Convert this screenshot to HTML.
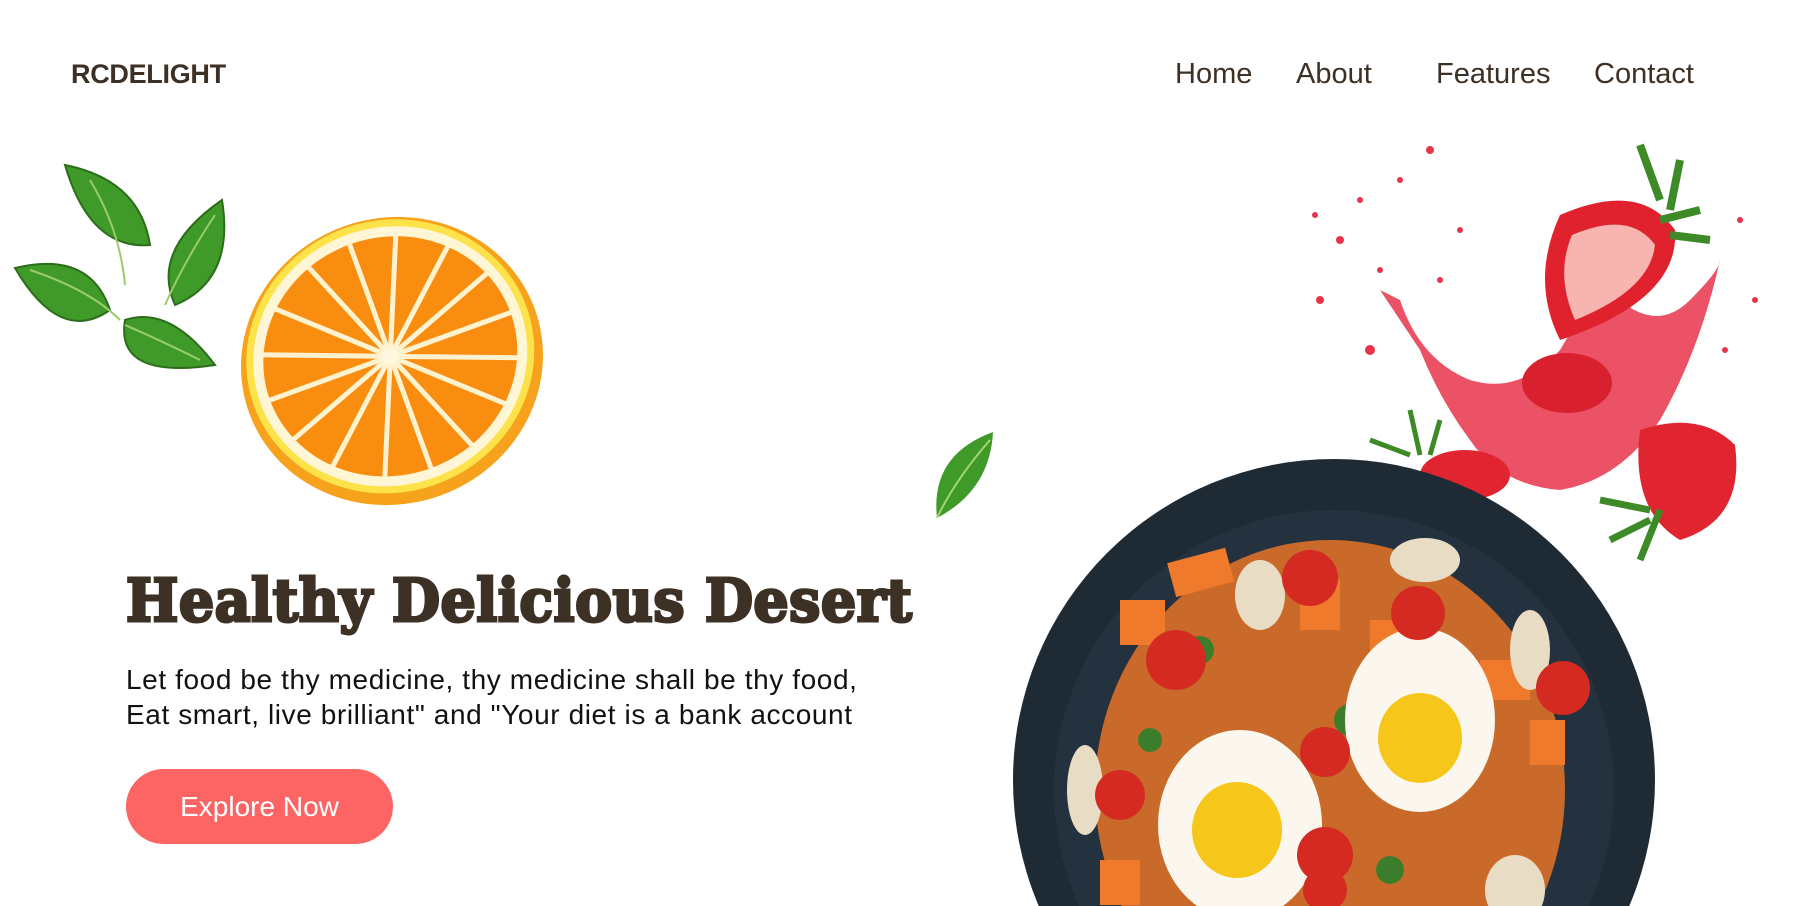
<!DOCTYPE html>
<html><head><meta charset="utf-8"><style>
html,body{margin:0;padding:0;background:#fff;width:1798px;height:906px;overflow:hidden;position:relative;font-family:"Liberation Sans",sans-serif}
.logo{position:absolute;left:71px;top:59px;font-weight:bold;font-size:27px;color:#3d3024;letter-spacing:-0.3px}
.nav{position:absolute;top:58px;font-size:29px;color:#3d3024;font-weight:300}
h1{position:absolute;left:126px;top:566px;margin:0;font-family:"DejaVu Serif","Liberation Serif",serif;font-weight:900;font-size:59px;color:#3d3024;white-space:nowrap;transform-origin:left top;transform:scaleX(0.94);letter-spacing:0.5px;-webkit-text-stroke:3px #3d3024}
p{position:absolute;left:126px;top:662px;margin:0;font-size:28px;line-height:35px;color:#111;letter-spacing:0.6px}
.btn{position:absolute;left:126px;top:769px;width:267px;height:75px;border-radius:38px;background:#fd6464;color:#fff;font-size:28px;text-align:center;line-height:75px}
svg{position:absolute;left:0;top:0}
</style></head><body>
<svg width="1798" height="906" viewBox="0 0 1798 906">
<g fill="#3f9a2a" stroke="#2b6e1a" stroke-width="2">
<path d="M65 165 Q140 180 150 245 Q90 250 65 165Z"/>
<path d="M222 200 Q235 280 175 305 Q150 250 222 200Z"/>
<path d="M15 268 Q90 250 110 310 Q60 345 15 268Z"/>
<path d="M215 365 Q170 305 125 320 Q115 380 215 365Z"/>
</g>
<path d="M90 180 Q120 230 125 285 M215 215 Q185 260 165 305 M30 270 Q90 290 120 320 M200 360 Q160 340 125 325" stroke="#9ccc6a" stroke-width="2" fill="none"/>
<g transform="rotate(-20 392 361)">
<ellipse cx="392" cy="361" rx="152" ry="143" fill="#f6a21c"/>
<ellipse cx="392" cy="356" rx="145" ry="136" fill="#fde24a"/>
<ellipse cx="392" cy="356" rx="138" ry="129" fill="#fff6d6"/>
<ellipse cx="392" cy="356" rx="128" ry="119" fill="#f98d10"/>
<g stroke="#fff3cf" stroke-width="5">
<line x1="392" y1="237" x2="392" y2="475"/><line x1="264" y1="356" x2="520" y2="356"/>
<line x1="300" y1="272" x2="484" y2="440"/><line x1="484" y1="272" x2="300" y2="440"/>
<line x1="345" y1="243" x2="439" y2="469"/><line x1="439" y1="243" x2="345" y2="469"/>
<line x1="270" y1="310" x2="514" y2="402"/><line x1="514" y1="310" x2="270" y2="402"/>
</g>
<circle cx="392" cy="356" r="8" fill="#fff8e0"/>
</g>
<path d="M993 432 Q930 455 937 518 Q990 490 993 432Z" fill="#3f9a2a"/>
<path d="M990 440 Q955 480 937 518" stroke="#a5d66d" stroke-width="2" fill="none"/>
<g fill="#e8344a">
<path d="M1400 300 Q1420 360 1470 380 Q1520 395 1560 350 Q1590 300 1600 280 Q1650 340 1690 300 Q1720 270 1720 260 Q1700 350 1660 420 Q1620 480 1560 490 Q1500 485 1470 440 Q1440 400 1420 350 Q1400 320 1380 290Z" opacity="0.85"/>
<circle cx="1340" cy="240" r="4"/><circle cx="1360" cy="200" r="3"/><circle cx="1430" cy="150" r="4"/><circle cx="1320" cy="300" r="4"/><circle cx="1400" cy="180" r="3"/><circle cx="1460" cy="230" r="3"/><circle cx="1370" cy="350" r="5"/><circle cx="1740" cy="220" r="3"/><circle cx="1755" cy="300" r="3"/><circle cx="1380" cy="270" r="3"/><circle cx="1440" cy="280" r="3"/><circle cx="1315" cy="215" r="3"/><circle cx="1725" cy="350" r="3"/>
</g>
<path d="M1560 215 Q1640 180 1675 230 Q1680 300 1560 340 Q1530 280 1560 215Z" fill="#e0222e"/>
<path d="M1572 235 Q1630 210 1655 245 Q1650 290 1575 320 Q1555 275 1572 235Z" fill="#f7b4b0"/>
<path d="M1640 145 L1660 200 M1680 160 L1670 210 M1700 210 L1660 220 M1710 240 L1670 235" stroke="#3d8a26" stroke-width="8"/>
<ellipse cx="1567" cy="383" rx="45" ry="30" fill="#d9202f"/>
<path d="M1640 430 Q1700 410 1735 445 Q1745 520 1680 540 Q1630 510 1640 430Z" fill="#e02530"/>
<path d="M1600 500 L1650 510 M1640 560 L1660 510 M1610 540 L1650 520" stroke="#3d8a26" stroke-width="7"/>
<path d="M1370 440 L1410 455 M1410 410 L1420 455 M1440 420 L1430 455" stroke="#3d8a26" stroke-width="5"/>
<ellipse cx="1465" cy="475" rx="45" ry="25" fill="#e02530"/>
<circle cx="1334" cy="780" r="321" fill="#1e2a34"/>
<circle cx="1334" cy="790" r="280" fill="#243240"/>
<g>
<ellipse cx="1330" cy="790" rx="235" ry="250" fill="#c96a2a"/>
<g fill="#f07a2c"><rect x="1170" y="555" width="60" height="35" transform="rotate(-15 1200 570)"/><rect x="1120" y="600" width="45" height="45"/><rect x="1300" y="580" width="40" height="50"/><rect x="1530" y="720" width="35" height="45"/><rect x="1100" y="860" width="40" height="45"/><rect x="1370" y="620" width="40" height="40"/><rect x="1480" y="660" width="50" height="40"/></g>
<g fill="#e9dcc4"><ellipse cx="1425" cy="560" rx="35" ry="22"/><ellipse cx="1260" cy="595" rx="25" ry="35"/><ellipse cx="1530" cy="650" rx="20" ry="40"/><ellipse cx="1085" cy="790" rx="18" ry="45"/><ellipse cx="1515" cy="890" rx="30" ry="35"/></g>
<g fill="#3b7d2a"><circle cx="1200" cy="650" r="14"/><circle cx="1350" cy="720" r="16"/><circle cx="1460" cy="700" r="12"/><circle cx="1150" cy="740" r="12"/><circle cx="1390" cy="870" r="14"/></g>
<ellipse cx="1240" cy="825" rx="82" ry="95" fill="#fbf7ee"/>
<ellipse cx="1420" cy="720" rx="75" ry="92" fill="#fbf7ee"/>
<ellipse cx="1237" cy="830" rx="45" ry="48" fill="#f7c61a"/>
<ellipse cx="1420" cy="738" rx="42" ry="45" fill="#f7c61a"/>
<g fill="#d42a22"><circle cx="1176" cy="660" r="30"/><circle cx="1310" cy="578" r="28"/><circle cx="1418" cy="613" r="27"/><circle cx="1563" cy="688" r="27"/><circle cx="1325" cy="752" r="25"/><circle cx="1120" cy="795" r="25"/><circle cx="1325" cy="855" r="28"/><circle cx="1325" cy="890" r="22"/></g>
</g>
</svg>
<div class="logo">RCDELIGHT</div>
<div class="nav" style="left:1175px">Home</div>
<div class="nav" style="left:1296px">About</div>
<div class="nav" style="left:1436px">Features</div>
<div class="nav" style="left:1594px">Contact</div>
<h1>Healthy Delicious Desert</h1>
<p>Let food be thy medicine, thy medicine shall be thy food,<br>Eat smart, live brilliant" and "Your diet is a bank account</p>
<div class="btn">Explore Now</div>
</body></html>
